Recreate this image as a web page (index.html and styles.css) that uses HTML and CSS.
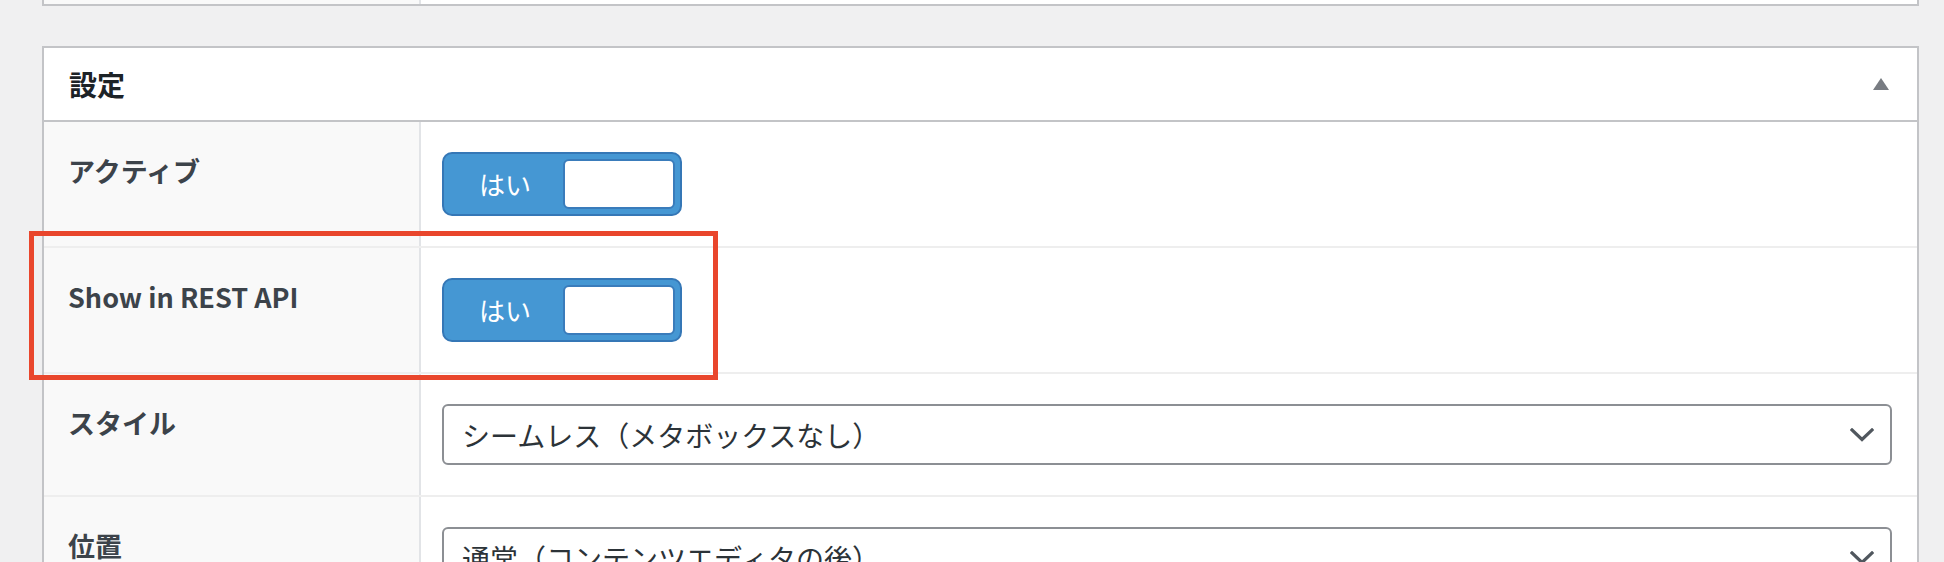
FILE: index.html
```html
<!DOCTYPE html>
<html lang="ja">
<head>
<meta charset="utf-8">
<title>設定</title>
<link rel="stylesheet" href="styles.css">
</head>
<body>
<div class="page">
  <div class="prev-box">
    <div class="prev-label"></div>
    <div class="prev-value"></div>
  </div>

  <div class="postbox">
    <div class="postbox-header">
      <h2 class="postbox-title">設定</h2>
      <span class="toggle-arrow"></span>
    </div>

    <div class="field-row">
      <div class="field-label">アクティブ</div>
      <div class="field-value">
        <div class="switch"><span class="switch-on">はい</span><span class="switch-knob"></span></div>
      </div>
    </div>

    <div class="field-row">
      <div class="field-label">Show in REST API</div>
      <div class="field-value">
        <div class="switch"><span class="switch-on">はい</span><span class="switch-knob"></span></div>
      </div>
    </div>

    <div class="field-row">
      <div class="field-label">スタイル</div>
      <div class="field-value">
        <div class="select"><span class="select-text">シームレス（メタボックスなし）</span>
          <svg class="chevron" viewBox="0 0 24 14" width="24" height="14"><path d="M2 2 L12 11.5 L22 2" fill="none" stroke="#50575e" stroke-width="3.2" stroke-linecap="square"/></svg>
        </div>
      </div>
    </div>

    <div class="field-row">
      <div class="field-label">位置</div>
      <div class="field-value">
        <div class="select"><span class="select-text">通常（コンテンツエディタの後）</span>
          <svg class="chevron" viewBox="0 0 24 14" width="24" height="14"><path d="M2 2 L12 11.5 L22 2" fill="none" stroke="#50575e" stroke-width="3.2" stroke-linecap="square"/></svg>
        </div>
      </div>
    </div>
  </div>

  <div class="highlight"></div>
</div>
</body>
</html>
```

FILE: styles.css
```css
html, body {
  margin: 0;
  padding: 0;
  background: #f0f0f1;
  font-family: "Noto Sans CJK JP", "Noto Sans", sans-serif;
  color: #3c434a;
  overflow: hidden;
}

.page {
  position: relative;
  padding: 0 25px 0 42px;
}

.prev-box {
  display: grid;
  grid-template-columns: 377px 1fr;
  height: 4px;
  border: 2px solid #c3c4c7;
  border-top: 0;
  background: #fff;
  margin-bottom: 40px;
}

.prev-label {
  background: #f9f9f9;
  border-right: 2px solid #e2e4e7;
}

.prev-value {
  background: #fff;
}

.postbox {
  border: 2px solid #c3c4c7;
  background: #fff;
}

.postbox-header {
  display: flex;
  align-items: center;
  justify-content: space-between;
  height: 72px;
  padding: 0 28px 0 25px;
  border-bottom: 2px solid #c3c4c7;
}

.postbox-title {
  margin: 0;
  font-size: 28px;
  font-weight: 700;
  color: #1d2327;
  line-height: 1;
}

.toggle-arrow {
  width: 0;
  height: 0;
  border-left: 8px solid transparent;
  border-right: 8px solid transparent;
  border-bottom: 12px solid #787c82;
}

.field-row {
  display: grid;
  grid-template-columns: 377px 1fr;
}

.field-row + .field-row {
  border-top: 2px solid #eeeeee;
}

.field-label {
  background: #f9f9f9;
  border-right: 2px solid #e2e4e7;
  padding: 30px 24px;
  font-size: 27px;
  font-weight: 700;
  line-height: 1.4;
  color: #3c434a;
}

.field-value {
  padding: 30px 25px 30px 21px;
  background: #fff;
}

.switch {
  box-sizing: border-box;
  display: flex;
  align-items: center;
  width: 240px;
  height: 64px;
  padding: 5px;
  background: #4597d3;
  border: 2px solid #3577b6;
  border-radius: 10px;
}

.switch-on {
  flex: 1;
  text-align: center;
  color: #fff;
  font-size: 26px;
  line-height: 1;
  padding-right: 2px;
}

.switch-knob {
  box-sizing: border-box;
  width: 112px;
  height: 50px;
  background: #fff;
  border: 2px solid #3a7cbb;
  border-radius: 6px;
}

.select {
  box-sizing: border-box;
  display: flex;
  align-items: center;
  justify-content: space-between;
  height: 61px;
  padding: 0 16px 0 18px;
  border: 2px solid #8c8f94;
  border-radius: 6px;
  background: #fff;
}

.select-text {
  font-size: 28px;
  line-height: 1;
  color: #2c3338;
}

.chevron {
  display: block;
}

.highlight {
  position: absolute;
  left: 29px;
  top: 231px;
  width: 679px;
  height: 139px;
  border: 5px solid #e9462c;
  pointer-events: none;
}
```
